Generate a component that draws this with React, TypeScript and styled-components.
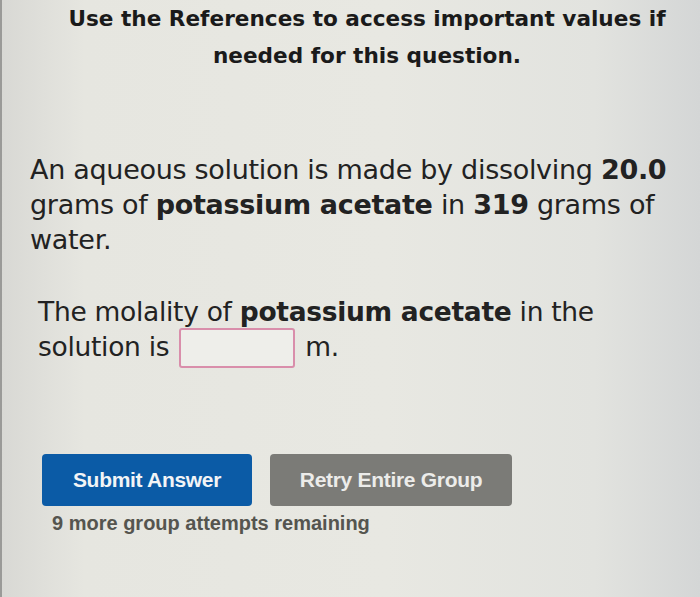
import React from "react";
import styled, { createGlobalStyle } from "styled-components";

const GlobalStyle = createGlobalStyle`
  html, body {
    margin: 0;
    padding: 0;
  }
  body {
    width: 700px;
    height: 597px;
    overflow: hidden;
    background: linear-gradient(90deg, #d8d8d4 0%, #e6e6e0 12%, #e8e8e2 55%, #e2e3df 85%, #d4d6d6 100%);
    font-family: "DejaVu Sans", Verdana, sans-serif;
    color: #1c1c1c;
  }
`;

const Page = styled.div`
  height: 597px;
  box-sizing: border-box;
  border-left: 2px solid #9a9a98;
  padding: 0 0 0 28px;
  display: flex;
  flex-direction: column;
`;

const Notice = styled.div`
  font-weight: bold;
  font-size: 21.6px;
  line-height: 37px;
  text-align: center;
  padding-left: 4px;
  color: #1a1a1a;
`;

const Question = styled.p`
  margin: 78px 0 0 0;
  max-width: 650px;
  font-size: 27px;
  line-height: 35px;
  letter-spacing: -0.3px;
  color: #222;
`;

const Prompt = styled.p`
  margin: 37px 0 0 8px;
  font-size: 26.5px;
  line-height: 35px;
  letter-spacing: -0.3px;
  color: #222;
`;

const AnswerBox = styled.span`
  display: inline-block;
  vertical-align: middle;
  width: 112px;
  height: 36px;
  margin: -2px 10px 0 10px;
  border: 2px solid #d98eab;
  border-radius: 3px;
  background: #eeeeea;
`;

const Actions = styled.div`
  display: flex;
  gap: 18px;
  margin: 86px 0 0 12px;
`;

const Button = styled.button<{ $tone: "primary" | "secondary" }>`
  height: 52px;
  padding: 0;
  width: ${(p) => (p.$tone === "primary" ? "210px" : "242px")};
  border: none;
  border-radius: 4px;
  background: ${(p) => (p.$tone === "primary" ? "#0b5ba6" : "#7b7b77")};
  color: ${(p) => (p.$tone === "primary" ? "#f2f4f6" : "#ececea")};
  font-family: "Liberation Sans", Arial, sans-serif;
  font-weight: bold;
  font-size: 21px;
  letter-spacing: -0.3px;
`;

const Remaining = styled.div`
  margin: 6px 0 0 22px;
  font-family: "Liberation Sans", Arial, sans-serif;
  font-weight: bold;
  font-size: 20px;
  color: #55554f;
`;

export default function App() {
  return (
    <>
      <GlobalStyle />
      <Page>
        <Notice>
          Use the References to access important values if
          <br />
          needed for this question.
        </Notice>
        <Question>
          An aqueous solution is made by dissolving <b>20.0</b> grams of{" "}
          <b>potassium acetate</b> in <b>319</b> grams of water.
        </Question>
        <Prompt>
          The molality of <b>potassium acetate</b> in the
          <br />
          solution is
          <AnswerBox />
          m.
        </Prompt>
        <Actions>
          <Button $tone="primary">Submit Answer</Button>
          <Button $tone="secondary">Retry Entire Group</Button>
        </Actions>
        <Remaining>9 more group attempts remaining</Remaining>
      </Page>
    </>
  );
}
